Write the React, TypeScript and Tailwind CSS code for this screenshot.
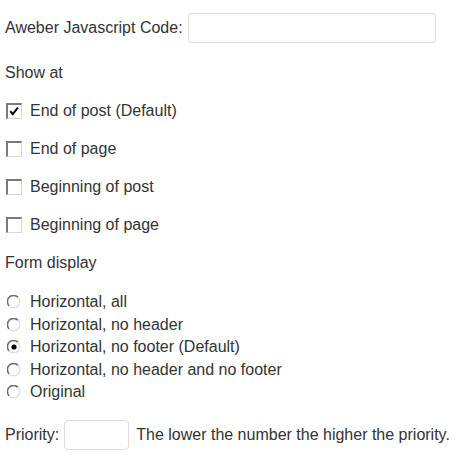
import React from "react";

function Check({ checked }: { checked?: boolean }) {
  return (
    <span className="relative inline-block w-[16px] h-[16px] shrink-0 bg-white border-t-2 border-l-2 border-b border-r border-t-[#7a7a7a] border-l-[#7a7a7a] border-b-[#d8d8d0] border-r-[#d8d8d0]">
      {checked && (
        <svg viewBox="0 0 13 13" className="absolute left-[1px] top-[1px] w-[11px] h-[11px]">
          <path d="M1.5 6 L4.5 9.5 L10.5 2" stroke="#000" strokeWidth="2.4" fill="none" />
        </svg>
      )}
    </span>
  );
}

function Radio({ checked }: { checked?: boolean }) {
  return (
    <svg viewBox="0 0 14 14" className="w-[14px] h-[14px] shrink-0">
      <circle cx="7" cy="7" r="6" fill="#fff" />
      <path d="M2.2 11 A6 6 0 0 1 11 2.2" stroke="#6f6f6f" strokeWidth="1.6" fill="none" />
      <path d="M11 2.2 A6 6 0 0 1 2.2 11" stroke="#e0e0e0" strokeWidth="1.4" fill="none" />
      {checked && <circle cx="7" cy="7" r="2.6" fill="#000" />}
    </svg>
  );
}

export default function App() {
  const font = { fontFamily: '"Liberation Sans", Arial, sans-serif' };
  const checks = [
    ["End of post (Default)", true],
    ["End of page", false],
    ["Beginning of post", false],
    ["Beginning of page", false],
  ] as const;
  const radios = [
    ["Horizontal, all", false],
    ["Horizontal, no header", false],
    ["Horizontal, no footer (Default)", true],
    ["Horizontal, no header and no footer", false],
    ["Original", false],
  ] as const;
  return (
    <div className="w-[457px] h-[457px] bg-white text-[#333] text-[16px] pl-[5px] pt-[13px]" style={font}>
      <div className="flex items-center h-[30px]">
        <span>Aweber Javascript Code:</span>
        <input className="ml-[5px] w-[248px] h-[30px] border border-[#dcdcdc] rounded-[4px] bg-white" />
      </div>
      <div className="mt-[20px] h-[20px] leading-[20px]">Show at</div>
      {checks.map(([t, c]) => (
        <div key={t} className="mt-[18px] h-[20px] flex items-center">
          <span className="ml-[1px] flex"><Check checked={c} /></span>
          <span className="ml-[8px]">{t}</span>
        </div>
      ))}
      <div className="mt-[18px] h-[20px] leading-[20px]">Form display</div>
      <div className="mt-[18px]">
        {radios.map(([t, c]) => (
          <div key={t} className="h-[22.5px] flex items-center">
            <span className="ml-[2px] flex"><Radio checked={c} /></span>
            <span className="ml-[9px]">{t}</span>
          </div>
        ))}
      </div>
      <div className="mt-[16px] flex items-center h-[30px]">
        <span>Priority:</span>
        <input className="ml-[5px] w-[65px] h-[30px] border border-[#dcdcdc] rounded-[4px] bg-white" />
        <span className="ml-[7px]">The lower the number the higher the priority.</span>
      </div>
    </div>
  );
}
